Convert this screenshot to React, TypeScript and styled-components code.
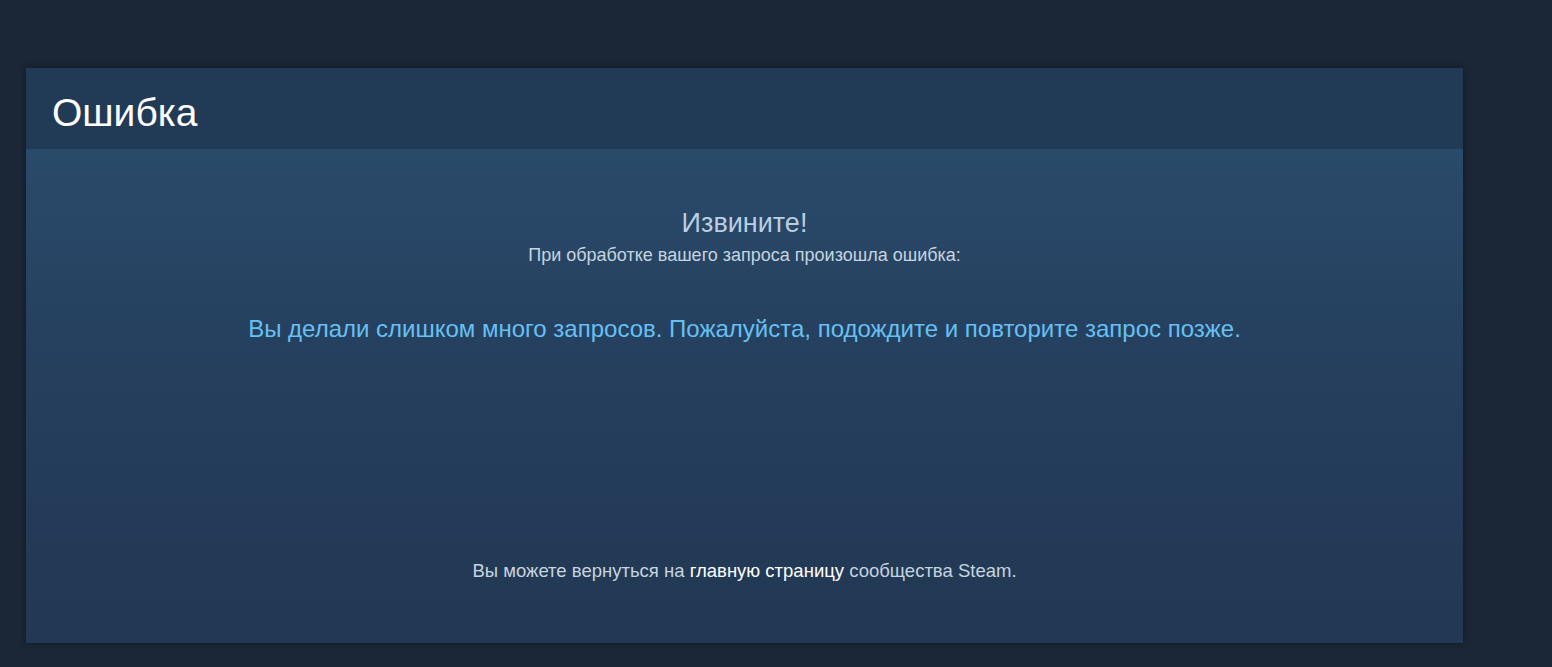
import React from 'react'
import styled, { createGlobalStyle } from 'styled-components'

const GlobalStyle = createGlobalStyle`
    html, body {
        margin: 0;
        padding: 0;
        background: #1b2636;
        font-family: 'Liberation Sans', Arial, sans-serif;
    }
`

const Page = styled.div`
    min-height: 667px;
    padding: 68px 89px 0 26px;
    box-sizing: border-box;
    background: #1b2636;
`

const Panel = styled.div`
    display: flex;
    flex-direction: column;
    height: 575px;
    box-shadow: 0 0 6px rgba(0, 0, 0, 0.35);
`

const Header = styled.div`
    height: 81px;
    box-sizing: border-box;
    display: flex;
    align-items: center;
    padding: 8px 0 0 26px;
    background: #213b56;
`

const Title = styled.h1`
    margin: 0;
    font-size: 39px;
    font-weight: normal;
    color: #ffffff;
`

const Body = styled.div`
    flex: 1;
    display: flex;
    flex-direction: column;
    align-items: center;
    padding-top: 57px;
    background: linear-gradient(180deg, #2a4a6b 0%, #253f5d 45%, #223854 100%);
`

const Sorry = styled.div`
    font-size: 27px;
    color: #b9cfe3;
    line-height: 34px;
`

const Sub = styled.div`
    font-size: 18px;
    color: #c6d4df;
    margin-top: 5px;
`

const Message = styled.div`
    font-size: 24px;
    color: #66c0f4;
    margin-top: 49px;
`

const Footer = styled.div`
    margin-top: auto;
    margin-bottom: 61px;
    font-size: 18.5px;
    color: #c6d4df;
`

const Link = styled.a`
    color: #ffffff;
    text-decoration: none;
`

export default function App() {
    return (
        <>
            <GlobalStyle />
            <Page>
                <Panel>
                    <Header>
                        <Title>Ошибка</Title>
                    </Header>
                    <Body>
                        <Sorry>Извините!</Sorry>
                        <Sub>При обработке вашего запроса произошла ошибка:</Sub>
                        <Message>
                            Вы делали слишком много запросов. Пожалуйста,
                            подождите и повторите запрос позже.
                        </Message>
                        <Footer>
                            Вы можете вернуться на{' '}
                            <Link href="#">главную страницу</Link> сообщества
                            Steam.
                        </Footer>
                    </Body>
                </Panel>
            </Page>
        </>
    )
}
